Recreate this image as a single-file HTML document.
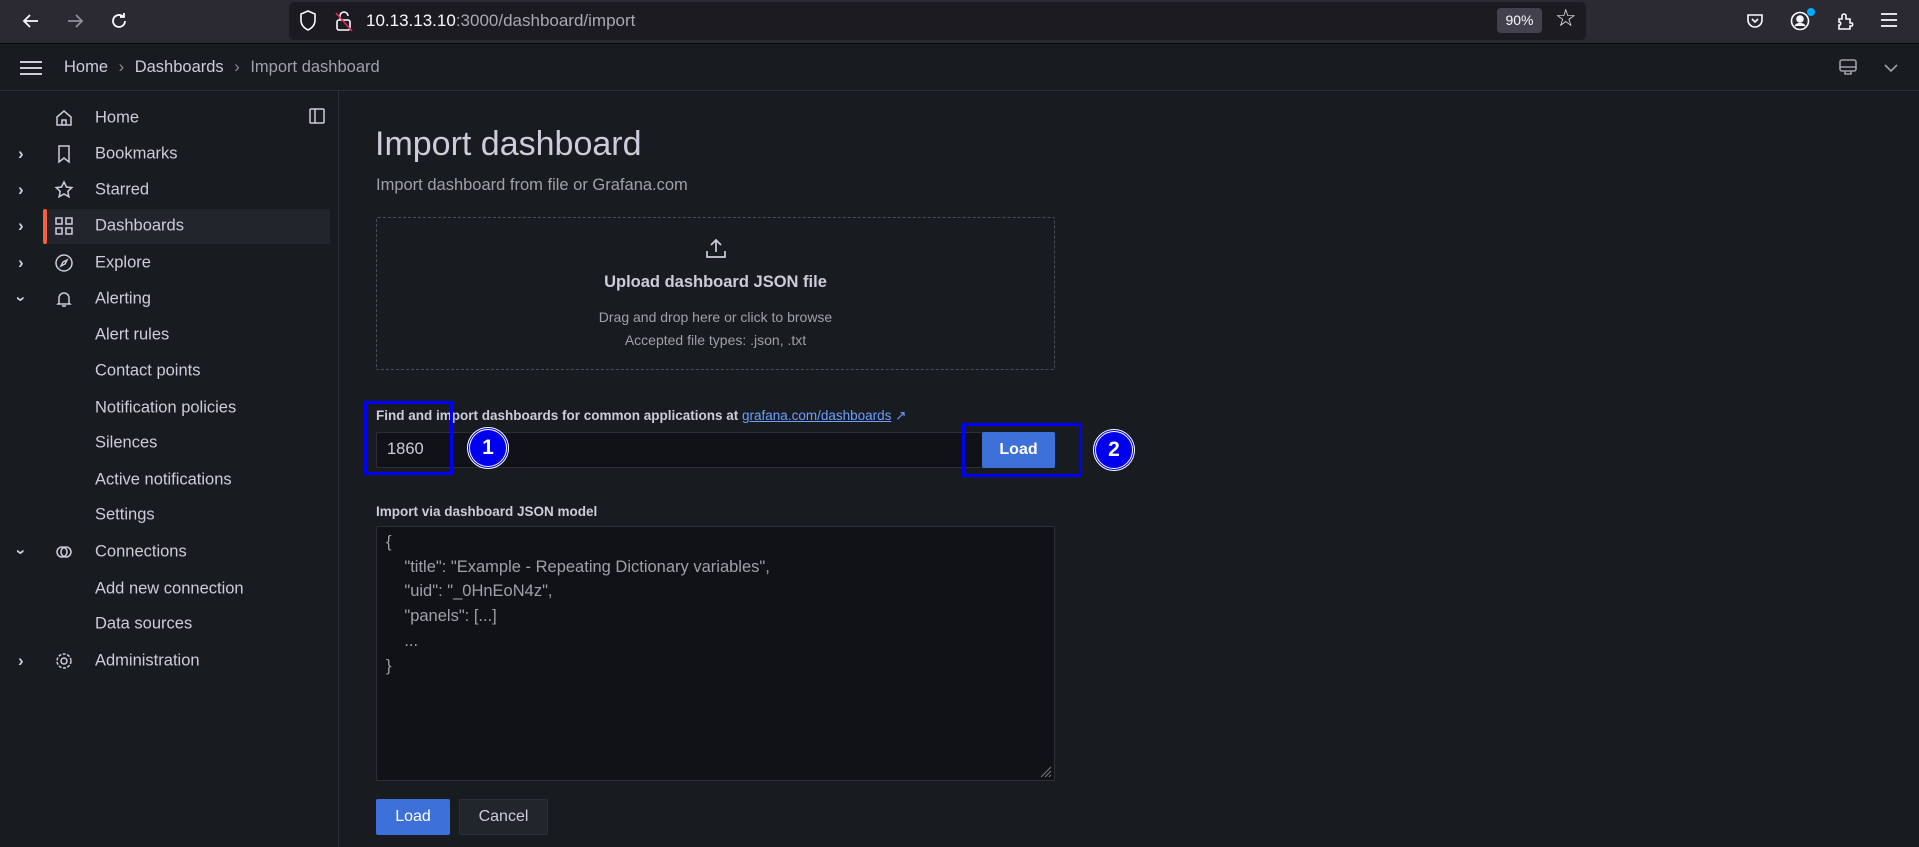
<!DOCTYPE html>
<html><head><meta charset="utf-8"><style>
*{box-sizing:border-box;margin:0;padding:0}
body{width:1919px;height:847px;overflow:hidden;background:#181b1f;font-family:"Liberation Sans",sans-serif;color:#ccccdc;position:relative}
.abs{position:absolute}
.tb{left:0;top:0;width:1919px;height:44px;background:#2b2a33;border-bottom:1px solid #0c0c0d}
.url{left:289px;top:2px;width:1297px;height:38px;background:#1c1b22;border-radius:5px}
.hdr{left:0;top:44px;width:1919px;height:47px;background:#181b1f;border-bottom:1px solid #2c2f35}
.side{left:0;top:91px;width:339px;height:756px;background:#181b1f;border-right:1px solid #2c2f35}
.it{position:absolute;left:95px;font-size:16.5px;color:#ccccdc;transform:translateY(-50%);white-space:nowrap}
.ic{position:absolute;left:55px;width:18px;height:18px;transform:translateY(-50%)}
.chev{position:absolute;left:18px;font-size:17px;font-weight:bold;color:#ccccdc;transform:translateY(-50%)}
svg{overflow:visible}
</style></head><body>
<div class="abs tb"></div>
<svg class="abs" style="left:21px;top:11px" width="20" height="20" viewBox="0 0 20 20" fill="none" stroke="#fbfbfe" stroke-width="1.8"><path d="M17 10H3M9 4L3 10l6 6"/></svg>
<svg class="abs" style="left:65px;top:11px" width="20" height="20" viewBox="0 0 20 20" fill="none" stroke="#8f8f9d" stroke-width="1.8"><path d="M3 10h14M11 4l6 6-6 6"/></svg>
<svg class="abs" style="left:109px;top:11px" width="20" height="20" viewBox="0 0 20 20" fill="none" stroke="#fbfbfe" stroke-width="1.8"><path d="M16 10a6 6 0 1 1-2-4.5M15 2v4h-4"/></svg>
<div class="abs url"></div>
<svg class="abs" style="left:299px;top:10px" width="18" height="22" viewBox="0 0 18 22" fill="none" stroke="#fbfbfe" stroke-width="1.6"><path d="M9 1L2 4v6c0 5 3 8 7 10 4-2 7-5 7-10V4z"/></svg>
<svg class="abs" style="left:335px;top:10px" width="18" height="22" viewBox="0 0 18 22" fill="none" stroke="#fbfbfe" stroke-width="1.6"><rect x="2" y="10" width="13" height="10" rx="2"/><path d="M5 10V6a4 4 0 0 1 8 0"/><path d="M1 3l16 18" stroke="#e22850"/></svg>
<div class="abs" style="left:366px;top:11px;font-size:17px;color:#fbfbfe">10.13.13.10<span style="color:#a8a8b3">:3000/dashboard/import</span></div>
<div class="abs" style="left:1497px;top:8px;width:45px;height:25px;background:#42414d;border-radius:4px;font-size:14px;color:#fbfbfe;text-align:center;line-height:25px">90%</div>
<div class="abs" style="left:1555px;top:4px;font-size:24px;color:#fbfbfe">☆</div>
<svg class="abs" style="left:1746px;top:12px" width="18" height="18" viewBox="0 0 18 18" fill="none" stroke="#fbfbfe" stroke-width="1.6"><path d="M2 3h14v5a7 7 0 0 1-14 0z"/><path d="M6 7l3 3 3-3"/></svg>
<svg class="abs" style="left:1790px;top:11px" width="20" height="20" viewBox="0 0 20 20" fill="none" stroke="#fbfbfe" stroke-width="1.6"><circle cx="10" cy="10" r="8.5"/><circle cx="10" cy="8" r="3" fill="#fbfbfe"/><path d="M5 15c2-3 8-3 10 0" fill="#fbfbfe"/></svg>
<div class="abs" style="left:1807px;top:8px;width:8px;height:8px;border-radius:50%;background:#0af"></div>
<svg class="abs" style="left:1836px;top:11px" width="20" height="20" viewBox="0 0 20 20" fill="none" stroke="#fbfbfe" stroke-width="1.6"><path d="M3 8h3V5a2 2 0 0 1 4 0v3h4v4h2v0a2 2 0 0 1 0 3h-2v3H3v-4h1a2 2 0 0 0 0-3H3z"/></svg>
<svg class="abs" style="left:1880px;top:12px" width="18" height="16" viewBox="0 0 18 16" stroke="#fbfbfe" stroke-width="1.7"><path d="M1 2h16M1 8h16M1 14h16"/></svg>

<div class="abs hdr"></div>
<svg class="abs" style="left:20px;top:60px" width="22" height="16" viewBox="0 0 22 16" stroke="#ccccdc" stroke-width="2"><path d="M0 2h22M0 8h22M0 14h22"/></svg>
<div class="abs" style="left:64px;top:58px;font-size:16.5px;color:#ccccdc">Home <span style="color:#8e8e8e;margin:0 6px">›</span> Dashboards <span style="color:#8e8e8e;margin:0 6px">›</span> <span style="color:#9fa1a8">Import dashboard</span></div>
<svg class="abs" style="left:1838px;top:58px" width="20" height="20" viewBox="0 0 20 20" fill="none" stroke="#9fa1a8" stroke-width="1.6"><rect x="2" y="2" width="16" height="11" rx="2"/><path d="M2 9h16M7 13v3h6v-3"/></svg>
<svg class="abs" style="left:1884px;top:63px" width="14" height="10" viewBox="0 0 14 10" fill="none" stroke="#9fa1a8" stroke-width="1.6"><path d="M1 2l6 6 6-6"/></svg>

<div class="abs side">
<svg class="abs" style="left:309px;top:17px" width="16" height="16" viewBox="0 0 16 16" fill="none" stroke="#ccccdc" stroke-width="1.5"><rect x="1" y="1" width="14" height="14" rx="1"/><path d="M6 1v14"/></svg>
<div class="abs" style="left:43px;top:118px;width:287px;height:35px;background:#22252b;border-radius:2px"></div>
<div class="abs" style="left:43px;top:118px;width:4px;height:35px;background:#f55f3e;border-radius:2px"></div>
</div>
<div class="abs" style="left:0;top:0">
<svg class="ic" style="top:118px" viewBox="0 0 18 18" fill="none" stroke="#ccccdc" stroke-width="1.5"><path d="M2 8l7-6 7 6v8H2z"/><path d="M7 16v-5h4v5"/></svg><div class="it" style="top:118px">Home</div>
<div class="chev" style="top:154px">›</div><svg class="ic" style="top:154px" viewBox="0 0 18 18" fill="none" stroke="#ccccdc" stroke-width="1.5"><path d="M4 1h10v16l-5-4-5 4z"/></svg><div class="it" style="top:154px">Bookmarks</div>
<div class="chev" style="top:190px">›</div><svg class="ic" style="top:190px" viewBox="0 0 18 18" fill="none" stroke="#ccccdc" stroke-width="1.5"><path d="M9 1l2.4 5 5.4.6-4 3.8 1.1 5.4L9 13l-4.9 2.8 1.1-5.4-4-3.8L6.6 6z"/></svg><div class="it" style="top:190px">Starred</div>
<div class="chev" style="top:226px">›</div><svg class="ic" style="top:226px" viewBox="0 0 18 18" fill="none" stroke="#ccccdc" stroke-width="1.5"><rect x="1" y="1" width="6" height="6"/><rect x="11" y="1" width="6" height="6"/><rect x="1" y="11" width="6" height="6"/><rect x="11" y="11" width="6" height="6"/></svg><div class="it" style="top:226px">Dashboards</div>
<div class="chev" style="top:263px">›</div><svg class="ic" style="top:263px" viewBox="0 0 18 18" fill="none" stroke="#ccccdc" stroke-width="1.5"><circle cx="9" cy="9" r="8"/><path d="M12 6l-2 4-4 2 2-4z"/></svg><div class="it" style="top:263px">Explore</div>
<div class="chev" style="top:299px;transform:translateY(-50%) rotate(90deg)">›</div><svg class="ic" style="top:299px" viewBox="0 0 18 18" fill="none" stroke="#ccccdc" stroke-width="1.5"><path d="M4 13V8a5 5 0 0 1 10 0v5l1 1H3zM7 16h4"/></svg><div class="it" style="top:299px">Alerting</div>
<div class="it" style="top:335px">Alert rules</div>
<div class="it" style="top:371px">Contact points</div>
<div class="it" style="top:408px">Notification policies</div>
<div class="it" style="top:443px">Silences</div>
<div class="it" style="top:480px">Active notifications</div>
<div class="it" style="top:515px">Settings</div>
<div class="chev" style="top:552px;transform:translateY(-50%) rotate(90deg)">›</div><svg class="ic" style="top:552px" viewBox="0 0 18 18" fill="none" stroke="#ccccdc" stroke-width="1.5"><circle cx="7" cy="9" r="5"/><circle cx="11" cy="9" r="5"/></svg><div class="it" style="top:552px">Connections</div>
<div class="it" style="top:589px">Add new connection</div>
<div class="it" style="top:624px">Data sources</div>
<div class="chev" style="top:661px">›</div><svg class="ic" style="top:661px" viewBox="0 0 18 18" fill="none" stroke="#ccccdc" stroke-width="1.5"><circle cx="9" cy="9" r="3"/><circle cx="9" cy="9" r="7" stroke-dasharray="3 1.5"/></svg><div class="it" style="top:661px">Administration</div>
</div>

<div class="abs" style="left:375px;top:125px;font-size:34px;color:#ccccdc">Import dashboard</div>
<div class="abs" style="left:376px;top:176px;font-size:16.5px;color:#9fa1a8">Import dashboard from file or Grafana.com</div>
<div class="abs" style="left:376px;top:217px;width:679px;height:153px;border:1px dashed #4a4d55;border-radius:2px"></div>
<svg class="abs" style="left:705px;top:237px" width="22" height="22" viewBox="0 0 22 22" fill="none" stroke="#ccccdc" stroke-width="1.7"><path d="M2 14v6h18v-6M11 15V3M6 8l5-5 5 5"/></svg>
<div class="abs" style="left:376px;top:273px;width:679px;text-align:center;font-size:16.5px;font-weight:bold;color:#ccccdc">Upload dashboard JSON file</div>
<div class="abs" style="left:376px;top:309px;width:679px;text-align:center;font-size:14px;color:#9fa1a8">Drag and drop here or click to browse</div>
<div class="abs" style="left:376px;top:332px;width:679px;text-align:center;font-size:14px;color:#9fa1a8">Accepted file types: .json, .txt</div>

<div class="abs" style="left:376px;top:408px;font-size:13.5px;font-weight:bold;color:#ccccdc">Find and import dashboards for common applications at <span style="color:#6e9fff;text-decoration:underline;font-weight:normal">grafana.com/dashboards</span> <span style="color:#6e9fff;font-weight:normal">↗</span></div>
<div class="abs" style="left:376px;top:432px;width:679px;height:36px;background:#111217;border:1px solid #2c2f35;border-radius:2px"></div>
<div class="abs" style="left:387px;top:440px;font-size:16.5px;color:#ccccdc">1860</div>
<div class="abs" style="left:982px;top:432px;width:73px;height:36px;background:#3d71d9;border-radius:2px;color:#fff;font-size:16px;font-weight:bold;text-align:center;line-height:36px">Load</div>
<div class="abs" style="left:364px;top:401px;width:89px;height:74px;border:3px solid #0000ff"></div>
<div class="abs" style="left:962px;top:423px;width:120px;height:54px;border:3px solid #0000ff"></div>
<div class="abs" style="left:467px;top:427px;width:42px;height:42px;border-radius:50%;background:#0000ee;border:3px double #fff;color:#fff;font-weight:bold;font-size:21px;text-align:center;line-height:36px">1</div>
<div class="abs" style="left:1093px;top:429px;width:42px;height:42px;border-radius:50%;background:#0000ee;border:3px double #fff;color:#fff;font-weight:bold;font-size:21px;text-align:center;line-height:36px">2</div>

<div class="abs" style="left:376px;top:504px;font-size:13.5px;font-weight:bold;color:#ccccdc">Import via dashboard JSON model</div>
<div class="abs" style="left:376px;top:526px;width:679px;height:255px;background:#111217;border:1px solid #2c2f35;border-radius:2px"></div>
<div class="abs" style="left:386px;top:530px;font-size:16.5px;line-height:24.7px;color:#9fa1a8;white-space:pre">{
    "title": "Example - Repeating Dictionary variables",
    "uid": "_0HnEoN4z",
    "panels": [...]
    ...
}</div>
<svg class="abs" style="left:1040px;top:766px" width="12" height="12" viewBox="0 0 12 12" stroke="#777" stroke-width="1"><path d="M1 11L11 1M5 11l6-6M9 11l2-2"/></svg>
<div class="abs" style="left:376px;top:799px;width:74px;height:36px;background:#3d71d9;border-radius:2px;color:#fff;font-size:16px;text-align:center;line-height:36px">Load</div>
<div class="abs" style="left:459px;top:799px;width:89px;height:36px;background:#22252b;border:1px solid #2c2f35;border-radius:2px;color:#ccccdc;font-size:16px;text-align:center;line-height:34px">Cancel</div>
</body></html>
